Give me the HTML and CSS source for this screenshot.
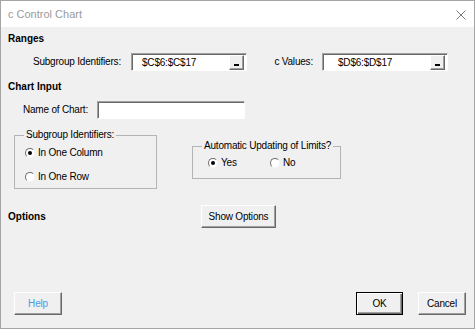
FILE: index.html
```html
<!DOCTYPE html>
<html lang="en">
<head>
  <meta charset="UTF-8" />
  <title>c Control Chart</title>
  <link rel="stylesheet" href="styles.css">
</head>
<body>

<div class="window">
  <!-- Title Bar -->
  <div class="titlebar">
    <span class="title">c Control Chart</span>
    <svg class="close" width="10" height="10" viewBox="0 0 10 10">
      <path d="M0.5 0.5 L9.5 9.5 M9.5 0.5 L0.5 9.5" stroke="#7a7a7a" stroke-width="1" fill="none"/>
    </svg>
  </div>

  <div class="content">
    <!-- Ranges -->
    <div class="heading">Ranges</div>
    <div class="row ranges">
      <label class="lbl-sub">Subgroup Identifiers:</label>
      <div class="textbox range-sub">
        <span class="value">$C$6:$C$17</span>
        <span class="ref-btn"><span class="bar"></span></span>
      </div>
      <label class="lbl-values">c Values:</label>
      <div class="textbox range-values">
        <span class="value">$D$6:$D$17</span>
        <span class="ref-btn"><span class="bar"></span></span>
      </div>
    </div>

    <!-- Chart Input -->
    <div class="heading chart-input">Chart Input</div>
    <div class="row name-row">
      <label class="lbl-name">Name of Chart:</label>
      <div class="textbox name-box"></div>
    </div>

    <div class="groups">
      <fieldset class="frame frame-sub">
        <legend>Subgroup Identifiers:</legend>
        <div class="radio first"><span class="dot checked"></span>In One Column</div>
        <div class="radio second"><span class="dot"></span>In One Row</div>
      </fieldset>

      <fieldset class="frame frame-auto">
        <legend>Automatic Updating of Limits?</legend>
        <div class="radio-line">
          <div class="radio yes"><span class="dot checked"></span>Yes</div>
          <div class="radio"><span class="dot"></span>No</div>
        </div>
      </fieldset>
    </div>

    <!-- Options -->
    <div class="row options-row">
      <div class="heading options-label">Options</div>
      <button class="btn show-options">Show Options</button>
    </div>
  </div>

  <!-- Footer -->
  <div class="footer">
    <button class="btn help">Help</button>
    <div class="right-buttons">
      <button class="btn ok">OK</button>
      <button class="btn">Cancel</button>
    </div>
  </div>
</div>

</body>
</html>
```

FILE: styles.css
```css
body {
  margin: 0;
  padding: 0;
  font-family: 'Liberation Sans', Arial, sans-serif;
  font-size: 10px;
  letter-spacing: -0.2px;
  color: #000;
  background: #f0f0f0;
}

.window {
  width: 475px;
  height: 329px;
  box-sizing: border-box;
  border: 1px solid #a5a5a5;
  background: #f0f0f0;
  display: flex;
  flex-direction: column;
}

.titlebar {
  height: 26px;
  background: #fff;
  display: flex;
  align-items: center;
  justify-content: space-between;
  padding: 0 8px 0 7px;
  flex-shrink: 0;
}

.title {
  font-size: 11px;
  letter-spacing: 0;
  color: #9a9a9a;
}

.close {
  margin-top: 1px;
}

.content {
  padding: 0 0 0 7px;
}

.heading {
  font-weight: bold;
  letter-spacing: 0;
  line-height: 12px;
  margin-top: 6px;
}

.row {
  display: flex;
  align-items: center;
}

label {
  line-height: 12px;
}

.ranges {
  margin-top: 8px;
}

.lbl-sub {
  width: 113px;
  text-align: right;
  margin-right: 10px;
}

.lbl-values {
  width: 66px;
  text-align: right;
  margin-right: 9px;
}

.textbox {
  height: 18px;
  box-sizing: border-box;
  background: #fff;
  border: 1px solid;
  border-color: #a0a0a0 #fff #fff #a0a0a0;
  box-shadow: inset 1px 1px #696969;
  display: flex;
  align-items: center;
  justify-content: space-between;
  padding-right: 2px;
}

.range-sub {
  width: 116px;
  padding-left: 10px;
}

.range-values {
  width: 126px;
  padding-left: 15px;
}

.ref-btn {
  width: 15px;
  height: 15px;
  box-sizing: border-box;
  background: #f0f0f0;
  border: 1px solid;
  border-color: #fff #696969 #696969 #fff;
  box-shadow: inset -1px -1px #a0a0a0;
  position: relative;
}

.ref-btn .bar {
  position: absolute;
  left: 4px;
  bottom: 3px;
  width: 5px;
  height: 2px;
  background: #000;
}

.chart-input {
  margin-top: 10px;
}

.name-row {
  margin-top: 8px;
}

.lbl-name {
  width: 80px;
  text-align: right;
  margin-right: 9px;
}

.name-box {
  width: 148px;
}

.groups {
  display: flex;
  align-items: flex-start;
  margin-top: 10px;
}

.frame {
  margin: 0;
  border: 1px solid #b4b4b4;
  padding: 0 0 0 9px;
  box-sizing: border-box;
}

.frame legend {
  padding: 0 2px;
  line-height: 12px;
}

.frame-sub {
  margin-left: 6px;
  width: 143px;
  height: 60px;
}

.frame-auto {
  margin-left: 35px;
  margin-top: 11px;
  width: 149px;
  height: 39px;
}

.radio {
  display: flex;
  align-items: center;
  line-height: 12px;
}

.radio.first {
  margin-top: 6px;
}

.radio.second {
  margin-top: 12px;
}

.radio-line {
  display: flex;
  margin-top: 5px;
  margin-left: 5px;
}

.radio.yes {
  width: 62px;
}

.dot {
  width: 10px;
  height: 10px;
  box-sizing: border-box;
  border-radius: 50%;
  border: 1px solid;
  border-color: #6d6d6d #f4f4f4 #f4f4f4 #6d6d6d;
  background: #fff;
  margin: 0 3px 0 1px;
  position: relative;
}

.dot.checked::after {
  content: "";
  position: absolute;
  left: 2px;
  top: 2px;
  width: 4px;
  height: 4px;
  border-radius: 50%;
  background: #000;
}

.options-row {
  margin-top: 16px;
  height: 23px;
}

.options-label {
  margin-top: 0;
  width: 193px;
}

.btn {
  font-family: inherit;
  font-size: 10px;
  letter-spacing: -0.2px;
  height: 23px;
  box-sizing: border-box;
  background: #f0f0f0;
  color: #000;
  border: 1px solid;
  border-color: #fff #696969 #696969 #fff;
  box-shadow: inset -1px -1px #a0a0a0;
  padding: 0;
  cursor: pointer;
}

.show-options {
  width: 75px;
}

.footer {
  margin-top: auto;
  padding: 0 8px 13px 13px;
  display: flex;
  justify-content: space-between;
  align-items: center;
}

.right-buttons {
  display: flex;
  gap: 15px;
}

.help {
  width: 48px;
  color: #4a9be8;
}

.ok {
  border: 1px solid #000;
  box-shadow: inset 1px 1px #fff, inset -1px -1px #696969, inset -2px -2px #a0a0a0;
}

.right-buttons .btn {
  width: 48px;
}

.right-buttons .ok {
  width: 47px;
}
```
